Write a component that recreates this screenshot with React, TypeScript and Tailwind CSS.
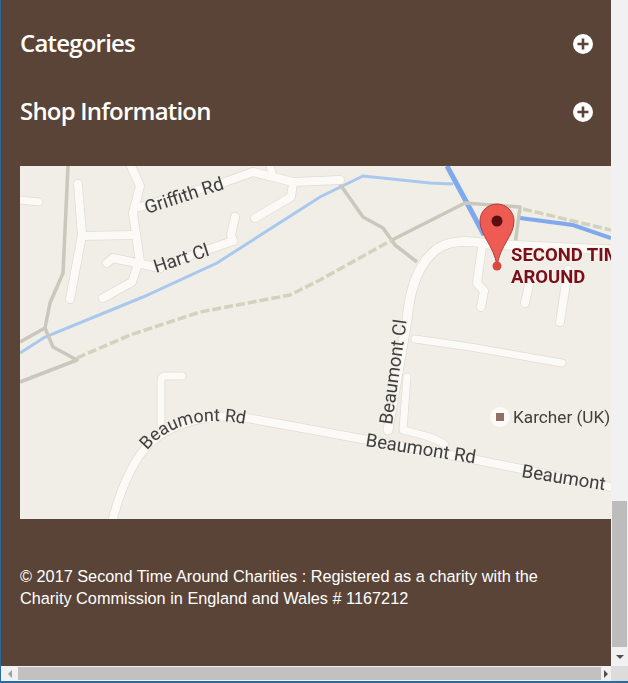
const road = "#fbfaf7";
const edge = "#dfddd4";
const grey = "#c9c8bc";

const whiteRoads: [string, number][] = [
  ["M20 200 L39 202", 7],
  ["M78 184 L82 235 L70 299", 8],
  ["M82 236 L134 235", 8],
  ["M131 166 L140 186 L133 213 L140 262", 8],
  ["M107 263 L113 258 L160 268", 8],
  ["M137 267 L132 282 L103 298", 8],
  ["M140 207 L225 182 L253 172 L293 182 L340 180", 8],
  ["M270 166 L273 176", 7],
  ["M293 183 L291 197 L255 218", 8],
  ["M157 267 L233 241 L231 235 L235 217", 8],
  ["M388 430 L407 320 C410 285 420 262 437 249 C450 240 470 240 487 244 L611 250", 9],
  ["M407 377 L403 430 L415 433 C430 437 440 440 445 445", 7],
  ["M415 339 L470 347 L562 363", 7],
  ["M482 247 L477 283 L484 291 L481 307", 8],
  ["M530 280 L525 303", 8],
  ["M568 270 L560 322", 8],
  ["M182 376 L165 376 Q161 376 161 381 L161 430", 7],
  ["M113 518 C122 485 133 460 150 443 C170 425 205 412 247 418 L477 460 L611 487", 8],
];

const greyRoads = [
  "M68 166 L63 273 L50 303 L45 328 L20 342",
  "M45 328 L53 347 L77 360 L20 382",
  "M337 180 L363 217 L383 228 L395 245 L417 262",
  "M392 240 L465 203 L520 207 L515 245",
];

function MapPicture() {
  return (
    <svg viewBox="20 166 591 353" className="block w-[591px] h-[353px] blur-[0.5px]">
      <defs>
        <path id="beaumont-curve" d="M143 456 C160 430 195 413 250 425" />
      </defs>
      <rect x="20" y="166" width="591" height="353" fill="#f0eee6" />
      <path d="M20 353 L45 337 L143 297 L217 263 L320 197 L363 176 L430 183 L453 184" fill="none" stroke="#a9c8ee" strokeWidth="3" />
      <path d="M447 166 L467 203 L484 235" fill="none" stroke="#7fa9ec" strokeWidth="5" />
      <path d="M520 218 L573 225 L611 238" fill="none" stroke="#7fa9ec" strokeWidth="4" />
      {greyRoads.map((d) => (
        <path key={d} d={d} fill="none" stroke={grey} strokeWidth="3.5" strokeLinejoin="round" />
      ))}
      <path d="M77 358 L130 335 L200 312 L290 295 L320 280 L392 240" fill="none" stroke="#d3d2bd" strokeWidth="3.5" strokeDasharray="9 3" />
      <path d="M523 209 L611 230" fill="none" stroke="#d3d2bd" strokeWidth="3.5" strokeDasharray="9 3" />
      {whiteRoads.map(([d, w]) => (
        <path key={d} d={d} fill="none" stroke={edge} strokeWidth={w + 1.5} strokeLinecap="round" strokeLinejoin="round" />
      ))}
      {whiteRoads.map(([d, w]) => (
        <path key={d + "w"} d={d} fill="none" stroke={road} strokeWidth={w} strokeLinecap="round" strokeLinejoin="round" />
      ))}
      <g fill="#3f3f3f" fontFamily="Roboto, sans-serif" fontSize="18.5" stroke="#f0eee6" strokeWidth="2" paintOrder="stroke">
        <text transform="translate(147 214) rotate(-18)">Griffith Rd</text>
        <text transform="translate(156 273) rotate(-18)">Hart Cl</text>
        <text transform="translate(392 425) rotate(-82)">Beaumont Cl</text>
        <text fontSize="17.8">
          <textPath href="#beaumont-curve" startOffset="7">Beaumont Rd</textPath>
        </text>
        <text transform="translate(365 446) rotate(9)">Beaumont Rd</text>
        <text transform="translate(521 477) rotate(9)">Beaumont</text>
        <text x="513" y="423" fontSize="17.2">Karcher (UK)</text>
      </g>
      <circle cx="500" cy="417" r="10" fill="#fbfaf7" />
      <rect x="496" y="413" width="8" height="8" fill="#8d7068" />
      <path d="M497 266 C494 245 480 236 480 221 A17 17 0 0 1 514 221 C514 236 500 245 497 266 Z" fill="#ee5b52" stroke="#b23a36" strokeWidth="1" />
      <circle cx="497" cy="221" r="5.5" fill="#5a0f12" />
      <circle cx="497" cy="266" r="4.5" fill="#d9493f" />
      <g fill="#7b0f17" fontFamily="Roboto, sans-serif" fontSize="18.5" fontWeight="700" stroke="#f5f3ee" strokeWidth="2" paintOrder="stroke">
        <text x="511" y="261">SECOND TIME</text>
        <text x="511" y="283">AROUND</text>
      </g>
    </svg>
  );
}

function Plus() {
  return (
    <svg viewBox="0 0 20 20" className="w-5 h-5 mt-[2px]">
      <circle cx="10" cy="10" r="10" fill="#fff" />
      <path d="M10 4.5v11M4.5 10h11" stroke="#5a4437" strokeWidth="2.6" />
    </svg>
  );
}

function Section({ title }: { title: string }) {
  return (
    <div className="flex items-center justify-between h-[68px] pl-[19px] pr-[18px]">
      <h2 className="text-[24px] leading-[32px] font-semibold text-white font-['Open_Sans',sans-serif] tracking-[-0.8px]">{title}</h2>
      <Plus />
    </div>
  );
}

export default function App() {
  return (
    <div className="w-[628px] h-[683px] overflow-hidden flex flex-col bg-[#f1f1f1] border-l border-[#2b6a9b]">
      <div className="flex flex-1 min-h-0">
        <div className="flex-1 flex flex-col bg-[#5a4437] pt-[9px]">
          <Section title="Categories" />
          <Section title="Shop Information" />
          <div className="pl-[19px] mt-[21px]">
            <MapPicture />
          </div>
          <p className="pl-[19px] pt-[46px] text-[16.3px] leading-[22px] text-white font-['Liberation_Sans',sans-serif]">
            © 2017 Second Time Around Charities : Registered as a charity with the
            <br />
            Charity Commission in England and Wales # 1167212
          </p>
        </div>
        <div className="w-[17px] flex flex-col items-center justify-end">
          <div className="w-[15px] h-[146px] bg-[#bcbcbc]" />
          <div className="h-[19px] flex items-center justify-center">
            <div className="w-0 h-0 border-x-[4px] border-x-transparent border-t-[4px] border-t-[#505050]" />
          </div>
        </div>
      </div>
      <div className="h-[15px] flex items-center">
        <div className="w-[17px] flex justify-center">
          <div className="w-0 h-0 border-y-[4px] border-y-transparent border-r-[4px] border-r-[#a0a0a0]" />
        </div>
        <div className="w-[583px] h-[13px] bg-[#c1c1c1]" />
        <div className="w-[10px] flex justify-center">
          <div className="w-0 h-0 border-y-[4px] border-y-transparent border-l-[4px] border-l-[#505050]" />
        </div>
        <div className="w-[17px] h-[15px] bg-[#dcdcdc]" />
      </div>
      <div className="h-[2px] bg-[#2b6a9b]" />
    </div>
  );
}
